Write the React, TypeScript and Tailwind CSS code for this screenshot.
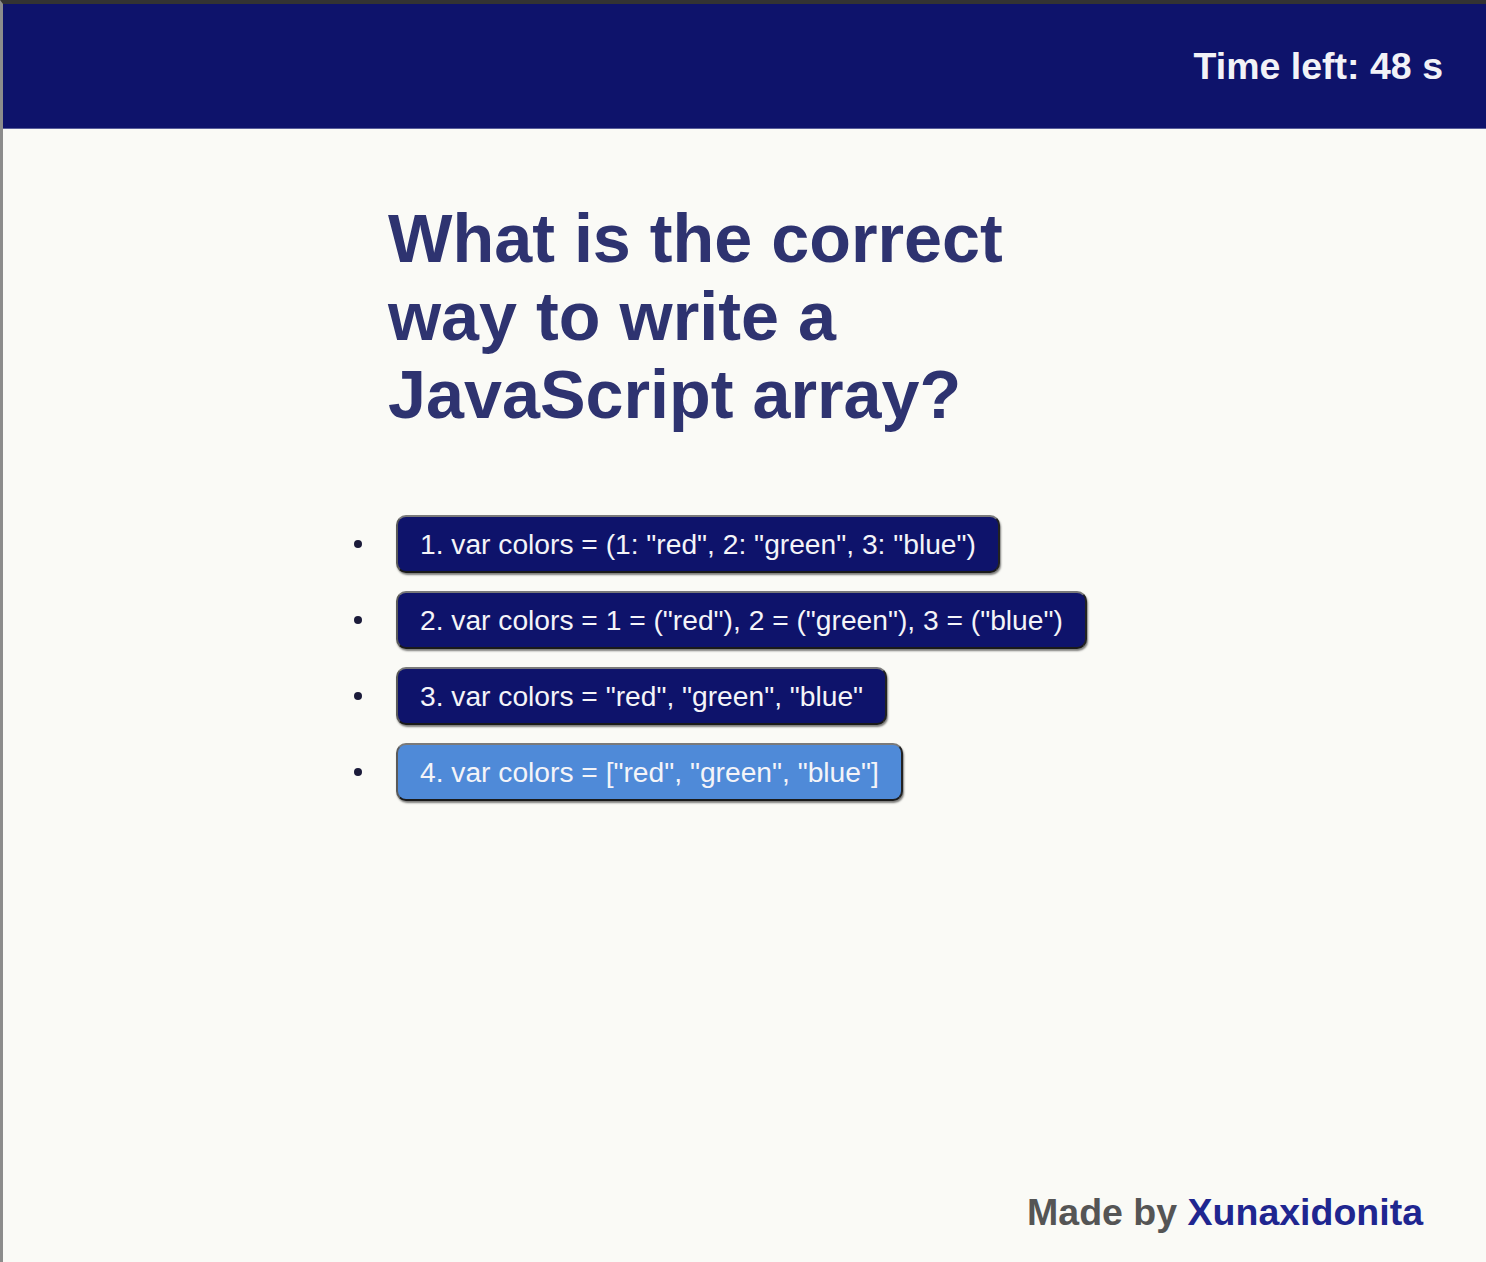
const answers = [
  { text: '1. var colors = (1: "red", 2: "green", 3: "blue")', picked: false },
  { text: '2. var colors = 1 = ("red"), 2 = ("green"), 3 = ("blue")', picked: false },
  { text: '3. var colors = "red", "green", "blue"', picked: false },
  { text: '4. var colors = ["red", "green", "blue"]', picked: true },
];

function Answer({ text, picked }: { text: string; picked: boolean }) {
  return (
    <li className="flex items-center gap-[34px]">
      <span className="w-[8px] h-[8px] rounded-full bg-[#1b1b3a]"></span>
      <button
        className={
          (picked ? "bg-[#4f8ad8] " : "bg-[#0e136b] ") +
          "h-[58px] px-[22px] rounded-[10px] border-2 border-t-[#7a7a7a] border-l-[#5a5a5a] border-r-[#222] border-b-[#1a1a1a] shadow-[1px_2px_2px_rgba(0,0,0,0.5)] text-[28.2px] text-[#f4f4f8] leading-none whitespace-nowrap"
        }
      >
        {text}
      </button>
    </li>
  );
}

export default function App() {
  return (
    <div className="min-h-[1262px] flex flex-col bg-[#fafaf6] border-t-4 border-t-[#333] border-l-[3px] border-l-[#8c8c8c] font-['Liberation_Sans',Arial,sans-serif]">
      <header className="h-[125px] bg-[#0e136b] border-b border-b-[#5a5f9a] flex items-center justify-end pr-[43px]">
        <p className="text-[37.5px] font-bold text-[#f2f2f7]">Time left: 48 s</p>
      </header>

      <main className="flex-1 pl-[351px] pt-[70px]">
        <h1 className="pl-[34px] w-[745px] text-[68.3px] leading-[78px] font-bold text-[#2e3370]">
          What is the correct way to write a JavaScript array?
        </h1>
        <ul className="mt-[82px] flex flex-col gap-[18px]">
          {answers.map((a) => (
            <Answer key={a.text} text={a.text} picked={a.picked} />
          ))}
        </ul>
      </main>

      <footer className="flex justify-end pr-[63px] pb-[22px]">
        <p className="text-[37.5px] font-bold text-[#555]">
          Made by <span className="text-[#1f2690]">Xunaxidonita</span>
        </p>
      </footer>
    </div>
  );
}
